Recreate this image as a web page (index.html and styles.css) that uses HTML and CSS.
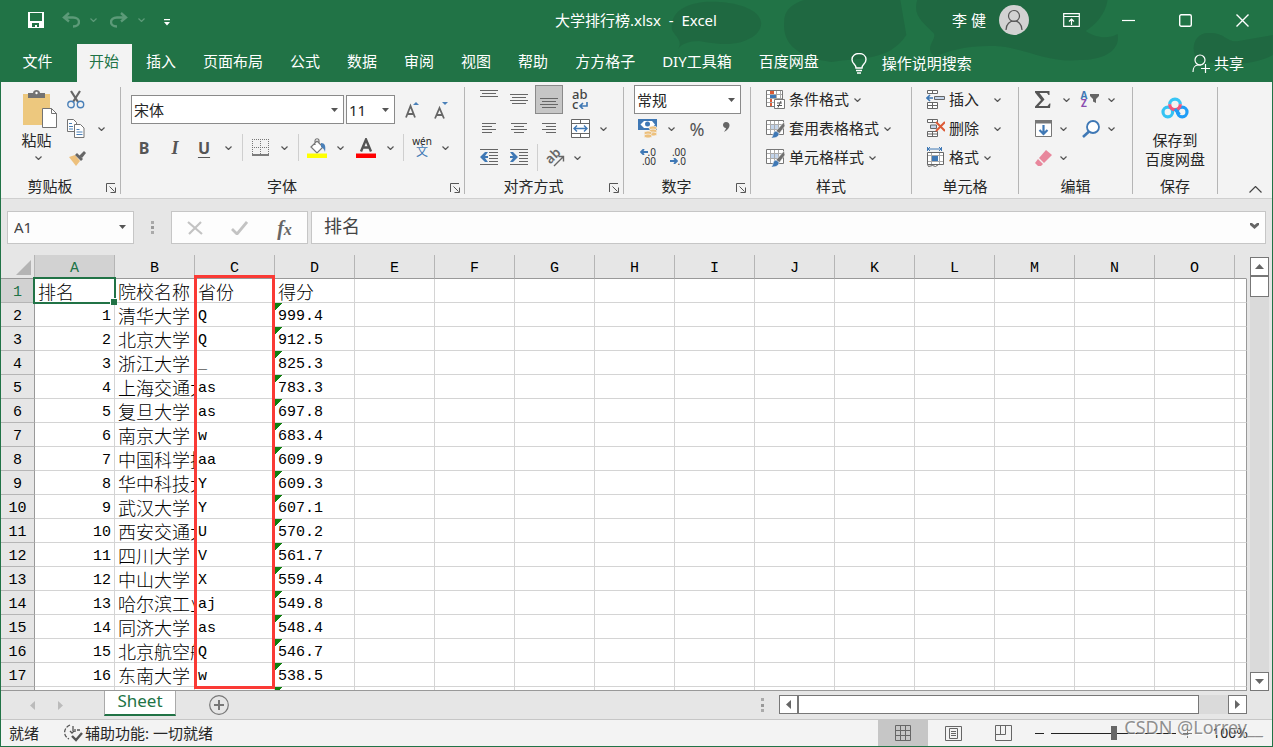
FILE: index.html
```html
<!DOCTYPE html>
<html lang="zh-CN">
<head>
<meta charset="utf-8">
<title>大学排行榜.xlsx - Excel</title>
<link rel="stylesheet" href="styles.css">
</head>
<body>
<svg class="defs" aria-hidden="true">
  <symbol id="chev" viewBox="0 0 7 4"><path d="M.5.5l3 3 3-3" fill="none" stroke="currentColor" stroke-width="1.2"/></symbol>
  <symbol id="tri" viewBox="0 0 7 4"><path d="M0 0h7L3.500 4z" fill="currentColor"/></symbol>
  <symbol id="launch" viewBox="0 0 10 10"><path d="M.5 9V.5H9M3.500 3.500l5 5M9.500 4.500v5h-5" fill="none" stroke="#555"/></symbol>
  <symbol id="table" viewBox="0 0 19 19"><path d="M.5 1.500h17v14H.5z" fill="#fff" stroke="#777"/><path d="M5 6h8v5H5z" fill="#c3d4ea"/><path d="M4.500 2v13M8.500 2v13M12.500 2v13M1 5.500h16M1 10.500h16" stroke="#aaa"/><path d="M18 3l1 4-6 8-3-3z" fill="#707070" stroke="#f3f3f3" stroke-width=".6"/><path d="M10 12l3 2c0 4-3 5-8 5 3-2 1-6 5-7z" fill="#3f78b5" stroke="#f3f3f3" stroke-width=".6"/></symbol>
</svg>
<div class="window">
  <header class="head">
    <svg class="art" viewBox="0 0 623 82" preserveAspectRatio="xMaxYMid slice" aria-hidden="true">
      <g fill="#1f6640" opacity=".8"><path d="M23 30C20 8 45 0 70 2c35 2 52 18 36 33-18 14-42 8-56 6-10 0-18 3-21 8 5-8-2-12-6-19z"/><path d="M135 22c0-12 8-18 20-22h96l6 35c-18 27-46 22-75 27-30-4-49-16-47-40z"/><path d="M268 0h190c-2 14-12 25-22 31 8 6 22 9 32 3 3 17-14 26-38 26-34 3-52-12-84-14-25-1-48 4-60 11-14-9 5-20-3-25C274 22 263 16 268 0z"/><path d="M548 60c-8-10-4-28 12-27 16 0 17 10 29 8l34-6v20c-18 10-51 12-75 5z"/></g>
    </svg>
    <div class="titlebar">
      <div class="qat">
        <button class="q-save" aria-label="保存"><svg width="16" height="16" viewBox="0 0 16 16"><path d="M0 0h16v16H0zM2 1v8h12V1zM4 11v4h3v-2h2v2h2v-4z" fill="#fff" fill-rule="evenodd"/></svg></button>
        <button class="q-btn dim" aria-label="撤消"><svg width="18" height="16" viewBox="0 0 18 16"><path d="M7 1L2 5.500l5 4M2 5.500h9c8 0 8 9 0 9" fill="none" stroke="currentColor" stroke-width="2.400"/></svg></button>
        <button class="q-chev dim" aria-label="撤消列表"><svg class="chev"><use href="#chev"/></svg></button>
        <button class="q-btn q-redo dim" aria-label="恢复"><svg width="18" height="16" viewBox="0 0 18 16"><path d="M11 1l5 4.500-5 4M16 5.500H7c-8 0-8 9 0 9" fill="none" stroke="currentColor" stroke-width="2.400"/></svg></button>
        <button class="q-chev dim" aria-label="恢复列表"><svg class="chev"><use href="#chev"/></svg></button>
        <button class="q-more" aria-label="自定义快速访问工具栏"><svg width="6" height="7" viewBox="0 0 6 7"><path d="M0 0h6v1.200H0zM0 3h6L3 6.500z" fill="#fff"/></svg></button>
      </div>
      <h1 class="title">大学排行榜.xlsx&nbsp; -&nbsp; Excel</h1>
      <div class="account">
        <span>李 健</span>
        <svg class="avatar" width="30" height="30" viewBox="0 0 30 30"><circle cx="15" cy="15" r="15" fill="#d2d2d2"/><g fill="none" stroke="#555" stroke-width="1.200"><circle cx="15" cy="11" r="5.500"/><path d="M7 25c0-12 16-12 16 0"/></g></svg>
        <button class="win" aria-label="功能区显示选项"><svg width="17" height="14" viewBox="0 0 17 14"><path d="M.7.7h15.600v12.600H.7zM1 3.500h15M8.500 12V6M6 8.500L8.500 6 11 8.500" fill="none" stroke="#fff" stroke-width="1.200"/></svg></button>
        <button class="win" aria-label="最小化"><svg width="13" height="13" viewBox="0 0 13 13"><path d="M0 6.500h13" stroke="#fff" stroke-width="1.200"/></svg></button>
        <button class="win" aria-label="最大化"><svg width="13" height="13" viewBox="0 0 13 13"><rect x=".7" y=".7" width="11.600" height="11.600" rx="1.500" fill="none" stroke="#fff" stroke-width="1.400"/></svg></button>
        <button class="win" aria-label="关闭"><svg width="13" height="13" viewBox="0 0 13 13"><path d="M.5.5l12 12M12.500.5l-12 12" stroke="#fff" stroke-width="1.400"/></svg></button>
      </div>
    </div>
    <nav class="tabs">
      <button class="tab file">文件</button>
      <button class="tab active">开始</button>
      <button class="tab">插入</button>
      <button class="tab">页面布局</button>
      <button class="tab">公式</button>
      <button class="tab">数据</button>
      <button class="tab">审阅</button>
      <button class="tab">视图</button>
      <button class="tab">帮助</button>
      <button class="tab">方方格子</button>
      <button class="tab">DIY工具箱</button>
      <button class="tab">百度网盘</button>
      <button class="tell"><svg width="16" height="21" viewBox="0 0 16 21"><path d="M5 15c0-4-4-4-4-8.500C1-1.500 15-1.500 15 6.500c0 4.500-4 4.500-4 8.500zM5 17.500h6M6 20h4" fill="none" stroke="#fff" stroke-width="1.400"/></svg>操作说明搜索</button>
      <button class="share"><svg width="18" height="19" viewBox="0 0 18 19"><g fill="none" stroke="#fff" stroke-width="1.200"><circle cx="8" cy="6" r="5"/><path d="M1 18c0-4 2-7 5-7h3M13.500 10v9M9 14.500h9"/></g></svg>共享</button>
    </nav>
  </header>

  <main class="main">
  <section class="ribbon" aria-label="开始">
    <div class="group g-clip">
      <div class="body clip">
        <button class="paste">
          <svg width="35" height="39" viewBox="0 0 35 39"><path d="M0 4h27v31H0z" fill="#edc87e"/><path d="M5 8V3h5c0-4 7-4 7 0h5v5z" fill="#737373"/><circle cx="13.500" cy="3" r="1.200" fill="#fff"/><path d="M19.500 18.500h9l5 5v14h-14z" fill="#fff" stroke="#737373"/><path d="M28.500 18.500v5h5" fill="none" stroke="#737373"/></svg>
          <span>粘贴</span><svg class="chev"><use href="#chev"/></svg>
        </button>
        <div class="rows">
          <div class="row"><button class="w32" aria-label="剪切"><svg width="18" height="19" viewBox="0 0 18 19"><path d="M4 1l7 11M13 1L6 12" stroke="#666" stroke-width="2.200"/><g fill="none" stroke="#4a80b8" stroke-width="1.400"><circle cx="4" cy="14.500" r="3.200"/><circle cx="13.500" cy="14.500" r="3.200"/></g></svg></button></div>
          <div class="row"><button class="w32" aria-label="复制"><svg width="18" height="19" viewBox="0 0 18 19"><g fill="#fff" stroke="#737373"><path d="M.5.5h6l3 3v9h-9z"/><path d="M7.500 5.500h6l3.500 3.500v9.500H7.500z"/></g><path d="M2 4.500h3M2 7.500h4M2 10h4M9.500 10.500h3M9.500 13h6M9.500 15.500h6" stroke="#4a80b8"/></svg></button><button class="w18" aria-label="复制选项"><svg class="chev"><use href="#chev"/></svg></button></div>
          <div class="row"><button class="w34" aria-label="格式刷"><svg width="18" height="16" viewBox="0 0 18 16"><path d="M1 7l6-2 5 6-4 5z" fill="#edc07c"/><path d="M7 5l2-2 6 6-2 2z" fill="#666"/><path d="M11 6l5-5 2 2-4 5z" fill="#666"/></svg></button></div>
        </div>
      </div>
      <div class="foot"><span>剪贴板</span><button class="launcher" aria-label="剪贴板设置"><svg width="10" height="10"><use href="#launch"/></svg></button></div>
    </div>

    <div class="group g-font">
      <div class="body fontbody">
        <div class="frow">
          <label class="combo c-name"><select aria-label="字体"><option>宋体</option></select><svg class="chev"><use href="#tri"/></svg></label>
          <label class="combo c-size"><select aria-label="字号"><option>11</option></select><svg class="chev"><use href="#tri"/></svg></label>
          <button class="w34" aria-label="增大字号"><svg width="14" height="18" viewBox="0 0 14 18"><path d="M1 16.500L5.500 5l4.500 11.500M2.500 13h6" fill="none" stroke="#666" stroke-width="1.800"/><path d="M8 4l3-3 3 3z" fill="#4a80b8"/></svg></button>
          <button class="w24" aria-label="减小字号"><svg width="14" height="18" viewBox="0 0 14 18"><path d="M1 17.500L5.500 7l4.500 10.500M2.500 14h6" fill="none" stroke="#666" stroke-width="1.800"/><path d="M8 1l3 3 3-3z" fill="#4a80b8"/></svg></button>
        </div>
        <div class="frow frow2">
          <button class="w30 letter">B</button><button class="w32 letter ital">I</button><button class="w26 letter und">U</button><button class="w22" aria-label="下划线选项"><svg class="chev"><use href="#chev"/></svg></button>
          <i class="sep s6"></i>
          <button class="w30" aria-label="边框"><svg width="17" height="17" viewBox="0 0 17 17"><path d="M.5 0v16M8.500 0v16M16.500 0v16M0 .5h17M0 8.500h17" stroke="#777" stroke-dasharray="1 1"/><path d="M0 16h17" stroke="#555" stroke-width="1.500"/></svg></button><button class="w18" aria-label="边框选项"><svg class="chev"><use href="#chev"/></svg></button>
          <i class="sep s10"></i>
          <button class="w28" aria-label="填充颜色"><svg width="20" height="20" viewBox="0 0 20 20"><path d="M4 9l6-6 6 6-6 6zM8 7V3c0-3 4-3 4 0v3" fill="#fff" stroke="#777" stroke-width="1.200"/><path d="M14 5c4 0 5 3 4 9-1-3-2-4-4-5z" fill="#4a80b8"/><path d="M0 15.500h20V20H0z" fill="#ff0"/></svg></button><button class="w18" aria-label="填充颜色选项"><svg class="chev"><use href="#chev"/></svg></button>
          <button class="w34" aria-label="字体颜色"><svg width="20" height="20" viewBox="0 0 20 20"><path d="M5 13.500L10 1.500l5 12M6.800 9.500h6.400" fill="none" stroke="#555" stroke-width="2.400"/><path d="M0 15.500h20V20H0z" fill="#f00"/></svg></button><button class="w14" aria-label="字体颜色选项"><svg class="chev"><use href="#chev"/></svg></button>
          <i class="sep s12"></i>
          <button class="w26 wen"><span>wén</span><b>文</b></button><button class="w20" aria-label="拼音选项"><svg class="chev"><use href="#chev"/></svg></button>
        </div>
      </div>
      <div class="foot"><span>字体</span><button class="launcher" aria-label="字体设置"><svg width="10" height="10"><use href="#launch"/></svg></button></div>
    </div>

    <div class="group g-align">
      <div class="body rows">
        <div class="row">
          <button class="w30" aria-label="顶端对齐"><svg class="up" width="18" height="7" viewBox="0 0 18 7"><path d="M0 .5h18M2 3.500h14M0 6.500h18" stroke="#666"/></svg></button>
          <button class="w30" aria-label="垂直居中"><svg width="18" height="11" viewBox="0 0 18 11"><path d="M0 .5h18M2 3.500h14M0 6.500h18M2 9.500h14" stroke="#666"/></svg></button>
          <button class="w30 on" aria-label="底端对齐"><svg class="down" width="18" height="11" viewBox="0 0 18 11"><path d="M0 .5h18M2 3.500h14M0 6.500h18M2 9.500h14" stroke="#666"/></svg></button>
          <button class="w32 wrap"><span>ab</span><span>c<svg width="9" height="7" viewBox="0 0 9 7"><path d="M8 0v4H1M4 1L1 4l3 3" fill="none" stroke="#3f78b5" stroke-width="1.600"/></svg></span></button>
        </div>
        <div class="row">
          <button class="w30" aria-label="左对齐"><svg width="15" height="11" viewBox="0 0 15 11"><path d="M0 .5h14M0 3.500h10M0 6.500h14M0 9.500h10" stroke="#666"/></svg></button>
          <button class="w30" aria-label="居中"><svg width="16" height="11" viewBox="0 0 16 11"><path d="M0 .5h16M3 3.500h10M0 6.500h16M3 9.500h10" stroke="#666"/></svg></button>
          <button class="w30" aria-label="右对齐"><svg width="14" height="11" viewBox="0 0 14 11"><path d="M0 .5h14M4 3.500h10M0 6.500h14M4 9.500h10" stroke="#666"/></svg></button>
          <button class="w32" aria-label="合并后居中"><svg width="19" height="19" viewBox="0 0 19 19"><path d="M.5.5h18v18H.5zM0 4.500h19M0 14.500h19M9.500 0v4M9.500 15v4" fill="#fff" stroke="#666"/><path d="M3 9.500h13M6 6.500l-3 3 3 3M13 6.500l3 3-3 3" fill="none" stroke="#3f78b5" stroke-width="1.400"/></svg></button>
          <button class="w14" aria-label="合并选项"><svg class="chev"><use href="#chev"/></svg></button>
        </div>
        <div class="row">
          <button class="w30" aria-label="减少缩进量"><svg width="18" height="17" viewBox="0 0 18 17"><path d="M0 .5h18M9 3.500h9M9 6.500h9M9 9.500h9M9 12.500h9M0 15.500h18" stroke="#666"/><path d="M0 8l5-5h3L5 7h3v2H5l3 4H5z" fill="#3f78b5"/></svg></button>
          <button class="w30" aria-label="增加缩进量"><svg width="18" height="17" viewBox="0 0 18 17"><path d="M0 .5h18M9 3.500h9M9 6.500h9M9 9.500h9M9 12.500h9M0 15.500h18" stroke="#666"/><path d="M8 8L3 3H0l3 4H0v2h3l-3 4h3z" fill="#3f78b5"/></svg></button>
          <i class="sep s6"></i>
          <button class="w30" aria-label="方向"><svg class="orient" width="19" height="18" viewBox="0 0 19 18"><text class="slant" x="7" y="11" transform="rotate(-45 7 7)">ab</text><path d="M8 17L17.500 7.500M12.500 7.500h5v5" fill="none" stroke="#666" stroke-width="1.400"/></svg></button>
          <button class="w14" aria-label="方向选项"><svg class="chev"><use href="#chev"/></svg></button>
        </div>
      </div>
      <div class="foot"><span>对齐方式</span><button class="launcher" aria-label="对齐设置"><svg width="10" height="10"><use href="#launch"/></svg></button></div>
    </div>

    <div class="group g-num">
      <div class="body rows">
        <div class="row"><label class="combo c-num"><select aria-label="数字格式"><option>常规</option></select><svg class="chev"><use href="#tri"/></svg></label></div>
        <div class="row">
          <button class="w28" aria-label="会计数字格式"><svg width="20" height="19" viewBox="0 0 20 19"><path d="M0 0h19v11H0z" fill="#3f78b5"/><path d="M2.500 5.500L6 2h8l3 3.500L14 9H6z" fill="#fff"/><circle cx="9.500" cy="5" r="2.500" fill="#3f78b5"/><g fill="#edc07c" stroke="#f3f3f3" stroke-width=".7"><ellipse cx="15" cy="9" rx="4" ry="2"/><ellipse cx="15" cy="12" rx="4" ry="2"/><ellipse cx="15" cy="15" rx="4" ry="2"/><ellipse cx="10" cy="14" rx="4" ry="2"/><ellipse cx="10" cy="17" rx="4" ry="2"/></g></svg></button>
          <button class="w18" aria-label="会计格式选项"><svg class="chev"><use href="#chev"/></svg></button>
          <button class="w34 pct">%</button>
          <button class="w24" aria-label="千位分隔样式"><svg class="comma" width="7" height="10" viewBox="0 0 7 10"><path d="M3 0c5 0 5 7-2 10 1-2 2-3 2-4-4 0-4-6 0-6z" fill="#666"/></svg></button>
        </div>
        <div class="row">
          <button class="w26 dec"><span><svg width="8" height="6" viewBox="0 0 8 6"><path d="M8 3H1M4 0L1 3l3 3" fill="none" stroke="#3f78b5" stroke-width="1.800"/></svg>.0</span><span>.00</span></button>
          <button class="w34 dec"><span>.00</span><span><svg width="8" height="6" viewBox="0 0 8 6"><path d="M0 3h7M4 0l3 3-3 3" fill="none" stroke="#3f78b5" stroke-width="1.800"/></svg>.0</span></button>
        </div>
      </div>
      <div class="foot"><span>数字</span><button class="launcher" aria-label="数字设置"><svg width="10" height="10"><use href="#launch"/></svg></button></div>
    </div>

    <div class="group g-style">
      <div class="body rows">
        <div class="row"><button class="cmd"><svg width="19" height="19" viewBox="0 0 19 19"><path d="M.5.5h16v16H.5z" fill="#fff" stroke="#777"/><path d="M4.500 1v15M10.500 1v8M14.500 1v8M1 4.500h15M1 8.500h15M1 12.500h8" stroke="#aaa"/><path d="M4 1h4v3H4zM4 9h2v3H4zM4 13h2v3H4z" fill="#dc5a36"/><path d="M4 5h6v3H4z" fill="#3f78b5"/><path d="M8.500 9.500h10v9h-10z" fill="#fff" stroke="#777"/><path d="M11 13h5M11 15.500h5M15 11l-3 6.500" stroke="#555"/></svg>条件格式<svg class="chev"><use href="#chev"/></svg></button></div>
        <div class="row"><button class="cmd"><svg width="19" height="19"><use href="#table"/></svg>套用表格格式<svg class="chev"><use href="#chev"/></svg></button></div>
        <div class="row"><button class="cmd"><svg width="19" height="19"><use href="#table"/></svg>单元格样式<svg class="chev"><use href="#chev"/></svg></button></div>
      </div>
      <div class="foot"><span>样式</span></div>
    </div>

    <div class="group g-cells">
      <div class="body rows">
        <div class="row"><button class="cmd far"><svg width="19" height="19" viewBox="0 0 19 19"><path d="M1.500.5h10v3h-10zM6.500.5v3M1.500 12.500h10v6h-10zM6.500 12.500v6M1.500 15.500h10" fill="#fff" stroke="#666"/><path d="M8.500 6.500h10v3h-10z" fill="#c3d4ea" stroke="#666"/><path d="M7 8H1M4 5L1 8l3 3" fill="none" stroke="#3f78b5" stroke-width="1.600"/></svg>插入<svg class="chev"><use href="#chev"/></svg></button></div>
        <div class="row"><button class="cmd far"><svg width="19" height="19" viewBox="0 0 19 19"><path d="M1.500.5h10v3h-10zM6.500.5v3M1.500 12.500h10v5h-10zM6.500 12.500v5M1.500 15h10" fill="#fff" stroke="#666"/><path d="M4.500 6h6v3.500h-6z" fill="#c3d4ea" stroke="#666"/><path d="M10 3l9 9M19 3l-9 9" stroke="#dc5a36" stroke-width="2"/></svg>删除<svg class="chev"><use href="#chev"/></svg></button></div>
        <div class="row"><button class="cmd"><svg width="19" height="20" viewBox="0 0 19 20"><path d="M1 2h15M1.500 0v4M15.500 0v4M4 0L2 2l2 2M13 0l2 2-2 2" fill="none" stroke="#3f78b5"/><path d="M1.500 5.500h16v12h-16z" fill="#fff" stroke="#666"/><path d="M5.500 6v11M13.500 6v11M2 8.500h15M2 14.500h15" fill="none" stroke="#aaa"/><path d="M1.500 17.500l1 2 4-1 3 1 3-2" fill="none" stroke="#666"/><path d="M6 9h6v5H6z" fill="#3f78b5"/></svg>格式<svg class="chev"><use href="#chev"/></svg></button></div>
      </div>
      <div class="foot"><span>单元格</span></div>
    </div>

    <div class="group g-edit">
      <div class="body rows">
        <div class="row">
          <button class="w28" aria-label="自动求和"><svg width="16" height="17" viewBox="0 0 16 17"><path d="M0 0h14.500v4h-1L12 2H4.500l5 6.500-6 6.500h9l2-2.500h1L15 17H0v-1.500l6-6.500L0 1.500z" fill="#555"/></svg></button><button class="w18" aria-label="求和选项"><svg class="chev"><use href="#chev"/></svg></button>
          <button class="w30 az"><span><b>A</b><em>Z</em></span><svg width="9" height="9" viewBox="0 0 9 9"><path d="M0 0h9v2L6 5v4L3 7.500V5L0 2z" fill="#666"/></svg></button><button class="w12" aria-label="排序选项"><svg class="chev"><use href="#chev"/></svg></button>
        </div>
        <div class="row">
          <button class="w28" aria-label="填充"><svg width="17" height="17" viewBox="0 0 17 17"><path d="M.5.5h16v16H.5z" fill="#fff" stroke="#777"/><path d="M0 0h17v3.500H0z" fill="#777"/><path d="M8.500 5v9M4.500 10l4 4 4-4" fill="none" stroke="#3f78b5" stroke-width="2.200"/></svg></button><button class="w12" aria-label="填充选项"><svg class="chev"><use href="#chev"/></svg></button>
          <button class="w28 find" aria-label="查找和选择"><svg width="18" height="18" viewBox="0 0 18 18"><circle cx="11" cy="7" r="6" fill="#fff" stroke="#3f78b5" stroke-width="1.800"/><path d="M7 11.500L1 17" stroke="#3f78b5" stroke-width="2.600"/></svg></button><button class="w12" aria-label="查找选项"><svg class="chev"><use href="#chev"/></svg></button>
        </div>
        <div class="row">
          <button class="w28" aria-label="清除"><svg width="17" height="16" viewBox="0 0 17 16"><path d="M11 0l6 5-8 8-5-5z" fill="#e8879c"/><path d="M3 9l5 5-2 2H3l-3-3z" fill="#e8879c"/></svg></button><button class="w12" aria-label="清除选项"><svg class="chev"><use href="#chev"/></svg></button>
        </div>
      </div>
      <div class="foot"><span>编辑</span></div>
    </div>

    <div class="group g-save">
      <div class="body">
        <button class="baidu"><svg width="28" height="22" viewBox="0 0 28 22"><g fill="none" stroke-width="3.200"><circle cx="6.800" cy="15" r="4.800" stroke="#35c3f3"/><circle cx="21.200" cy="15" r="4.800" stroke="#1e9df7"/><path d="M8.700 7.500a5.300 5.300 0 0 1 10.600 0" stroke="#38c5f5"/><path d="M8.700 7.300a5.300 5.300 0 0 0 10.600 0" stroke="#f2557c"/><path d="M14 12l4.500 5.500" stroke="#1e9df7"/></g></svg><span>保存到</span><span>百度网盘</span></button>
      </div>
      <div class="foot"><span>保存</span></div>
    </div>
    <button class="collapse" aria-label="折叠功能区"><svg width="13" height="7" viewBox="0 0 13 7"><path d="M.5 6.500l6-6 6 6" fill="none" stroke="#444" stroke-width="1.200"/></svg></button>
  </section>

  <section class="fbar">
    <label class="namebox"><input value="A1" aria-label="名称框"><svg class="chev"><use href="#tri"/></svg></label>
    <i class="dots"></i>
    <div class="fbtns">
      <button aria-label="取消"><svg width="16" height="14" viewBox="0 0 16 14"><path d="M1 1l14 12M14 1L2 13" stroke="#c3c3c3" stroke-width="2.200"/></svg></button>
      <button aria-label="输入"><svg width="17" height="14" viewBox="0 0 17 14"><path d="M1 8l5 5L16 1" fill="none" stroke="#c3c3c3" stroke-width="2.800"/></svg></button>
      <button class="fx" aria-label="插入函数"><i>f</i><i class="x">x</i></button>
    </div>
    <label class="formula"><input value="排名" aria-label="编辑栏"><svg width="9" height="6" viewBox="0 0 9 6"><path d="M0 0h2l2.500 2L7 0h2v2L4.500 6 0 2z" fill="#666"/></svg></label>
  </section>

  <section class="work">
    <div class="sheet">
      <table>
        <colgroup><col class="c-head"><col span="15" class="c-col"><col></colgroup>
        <thead><tr><th class="corner"><svg width="15" height="15" viewBox="0 0 15 15"><path d="M15 0v15H0z" fill="#b4b4b4"/></svg></th><th class="sel">A</th><th>B</th><th>C</th><th>D</th><th>E</th><th>F</th><th>G</th><th>H</th><th>I</th><th>J</th><th>K</th><th>L</th><th>M</th><th>N</th><th>O</th><th class="last"></th></tr></thead>
        <tbody>
          <tr><th class="sel">1</th><td class="zh">排名</td><td class="zh">院校名称</td><td class="zh">省份</td><td class="zh">得分</td><td class="rest" colspan="12"></td></tr>
          <tr><th>2</th><td class="n">1</td><td class="zh">清华大学</td><td>Q</td><td class="t">999.4</td><td class="rest" colspan="12"></td></tr>
          <tr><th>3</th><td class="n">2</td><td class="zh">北京大学</td><td>Q</td><td class="t">912.5</td><td class="rest" colspan="12"></td></tr>
          <tr><th>4</th><td class="n">3</td><td class="zh">浙江大学</td><td>_</td><td class="t">825.3</td><td class="rest" colspan="12"></td></tr>
          <tr><th>5</th><td class="n">4</td><td class="zh">上海交通大学</td><td>as</td><td class="t">783.3</td><td class="rest" colspan="12"></td></tr>
          <tr><th>6</th><td class="n">5</td><td class="zh">复旦大学</td><td>as</td><td class="t">697.8</td><td class="rest" colspan="12"></td></tr>
          <tr><th>7</th><td class="n">6</td><td class="zh">南京大学</td><td>w</td><td class="t">683.4</td><td class="rest" colspan="12"></td></tr>
          <tr><th>8</th><td class="n">7</td><td class="zh">中国科学技术大学</td><td>aa</td><td class="t">609.9</td><td class="rest" colspan="12"></td></tr>
          <tr><th>9</th><td class="n">8</td><td class="zh">华中科技大学</td><td>Y</td><td class="t">609.3</td><td class="rest" colspan="12"></td></tr>
          <tr><th>10</th><td class="n">9</td><td class="zh">武汉大学</td><td>Y</td><td class="t">607.1</td><td class="rest" colspan="12"></td></tr>
          <tr><th>11</th><td class="n">10</td><td class="zh">西安交通大学</td><td>U</td><td class="t">570.2</td><td class="rest" colspan="12"></td></tr>
          <tr><th>12</th><td class="n">11</td><td class="zh">四川大学</td><td>V</td><td class="t">561.7</td><td class="rest" colspan="12"></td></tr>
          <tr><th>13</th><td class="n">12</td><td class="zh">中山大学</td><td>X</td><td class="t">559.4</td><td class="rest" colspan="12"></td></tr>
          <tr><th>14</th><td class="n">13</td><td class="zh">哈尔滨工业大学</td><td>aj</td><td class="t">549.8</td><td class="rest" colspan="12"></td></tr>
          <tr><th>15</th><td class="n">14</td><td class="zh">同济大学</td><td>as</td><td class="t">548.4</td><td class="rest" colspan="12"></td></tr>
          <tr><th>16</th><td class="n">15</td><td class="zh">北京航空航天大学</td><td>Q</td><td class="t">546.7</td><td class="rest" colspan="12"></td></tr>
          <tr><th>17</th><td class="n">16</td><td class="zh">东南大学</td><td>w</td><td class="t">538.5</td><td class="rest" colspan="12"></td></tr>
          <tr><th></th><td></td><td></td><td></td><td class="t"></td><td class="rest" colspan="12"></td></tr>
        </tbody>
      </table>
      <div class="cursor"></div>
      <div class="mark"></div>
    </div>
    <div class="vscroll"><button aria-label="向上滚动"><svg width="9" height="5" viewBox="0 0 9 5"><path d="M0 5h9L4.500 0z" fill="#666"/></svg></button><div class="vthumb"></div><button class="end" aria-label="向下滚动"><svg width="9" height="5" viewBox="0 0 9 5"><path d="M0 0h9L4.500 5z" fill="#666"/></svg></button></div>
  </section>

  <section class="sheetbar">
    <button class="nav" aria-label="上一个工作表"><svg width="5" height="9" viewBox="0 0 5 9"><path d="M5 0v9L0 4.500z" fill="#bbb"/></svg></button>
    <button class="nav" aria-label="下一个工作表"><svg width="5" height="9" viewBox="0 0 5 9"><path d="M0 0v9l5-4.500z" fill="#bbb"/></svg></button>
    <button class="sheettab">Sheet</button>
    <button class="add" aria-label="新工作表"><svg width="20" height="20" viewBox="0 0 20 20"><circle cx="10" cy="10" r="9.300" fill="none" stroke="#777" stroke-width="1.200"/><path d="M10 5v10M5 10h10" stroke="#777" stroke-width="2"/></svg></button>
    <i class="dots small"></i>
    <div class="hscroll"><button aria-label="向左滚动"><svg width="5" height="9" viewBox="0 0 5 9"><path d="M5 0v9L0 4.500z" fill="#666"/></svg></button><div class="hthumb"></div><button class="end" aria-label="向右滚动"><svg width="5" height="9" viewBox="0 0 5 9"><path d="M0 0v9l5-4.500z" fill="#666"/></svg></button></div>
  </section>

  <footer class="status">
    <span class="ready">就绪</span>
    <button class="access"><svg width="19" height="18" viewBox="0 0 19 18"><path d="M6 1C-1 4-1 12 5 15" fill="none" stroke="#555" stroke-width="1.300" stroke-dasharray="4 1.500"/><path d="M9 2v5M6 7l2 2 2-2M13 6h3M11 5v3" fill="none" stroke="#555" stroke-width="1.300"/><path d="M8 12l4 4 6-7" fill="none" stroke="#555" stroke-width="2.400"/></svg>辅助功能: 一切就绪</button>
    <button class="view on" aria-label="普通"><svg width="16" height="16" viewBox="0 0 16 16"><path d="M.5.5h15v15H.5zM5.500 0v16M10.500 0v16M0 5.500h16M0 10.500h16" fill="none" stroke="#666"/></svg></button>
    <button class="view" aria-label="页面布局视图"><svg width="17" height="15" viewBox="0 0 17 15"><path d="M.5.5h16v14H.5zM4.500 2.500h8v10h-8zM6 5.500h5M6 7.500h5M6 9.500h5" fill="none" stroke="#666"/></svg></button>
    <button class="view" aria-label="分页预览"><svg width="17" height="16" viewBox="0 0 17 16"><path d="M.5.5h16v15H.5zM.5 9.500h10V.5M5.500.5v9" fill="none" stroke="#666"/></svg></button>
    <button class="zoom" aria-label="缩小"><svg width="9" height="9" viewBox="0 0 9 9"><path d="M0 4.500h9" stroke="#222"/></svg></button>
    <input class="slider" type="range" min="0" max="100" value="50" aria-label="缩放">
    <button class="zoom" aria-label="放大"><svg width="9" height="9" viewBox="0 0 9 9"><path d="M0 4.500h9M4.500 0v9" stroke="#777"/></svg></button>
    <button class="level">100%</button>
    <span class="watermark">CSDN @Lorrey__</span>
  </footer>
  </main>
</div>
</body>
</html>
```
FILE: styles.css
```css
* { box-sizing: border-box; }
body { margin: 0; font: 15px/20px "Noto Sans", "Noto Sans CJK SC", sans-serif; color: #262626; }
button, input, select { font: inherit; color: inherit; border: 0; padding: 0; margin: 0; background: none; outline: 0; }
button { display: flex; align-items: center; justify-content: center; white-space: nowrap; flex: none; }
svg { display: block; flex: none; }
.defs { position: absolute; width: 0; height: 0; }
.chev { width: 7px; height: 4px; color: #555; }

.window { height: 100vh; display: flex; flex-direction: column; overflow: hidden; background: #e6e6e6; }
.main { flex: 1; min-height: 0; display: flex; flex-direction: column; border: solid #217346; border-width: 0 1px 1px; }

/* title and tabs */
.head { position: relative; background: #217346; color: #fff; padding: 0 1px; }
.art { position: absolute; right: 0; top: 0; width: 49%; height: 100%; }
.titlebar { position: relative; display: grid; grid-template-columns: 1fr auto 1fr; height: 44px; align-items: center; padding: 0 1px 4px 0; }
.title { margin: 0; font-size: 15px; font-weight: 400; }
.qat { display: flex; align-items: center; padding-left: 19px; }
.qat .chev { color: inherit; }
.dim { color: #5c9a78; }
.q-save { width: 32px; margin-right: 4px; }
.q-btn { width: 30px; }
.q-chev { width: 14px; }
.q-redo { margin-left: 4px; }
.q-more { width: 18px; margin-left: 10px; padding-top: 4px; }
.account { display: flex; align-items: center; justify-content: flex-end; }
.avatar { margin: 0 14px 0 13px; }
.win { width: 57px; height: 30px; }
.tabs { position: relative; display: flex; height: 38px; gap: 1px; }
.tab { padding: 0 13px 4px; }
.tab.file { width: 75px; padding: 0 2px 4px 0; }
.tab.active { background: #f3f3f3; color: #217346; padding: 0 13px 4px 12px; }
.tell { gap: 15px; padding-left: 18px; }
.share { gap: 4px; margin-left: auto; padding-right: 28px; }

/* ribbon */
.ribbon { display: flex; background: #f3f3f3; border-bottom: 1px solid #cfcfcf; padding: 5px 0 4px; height: 117px; flex: none; }
.group { display: flex; flex-direction: column; border-right: 1px solid #b5b5b5; height: 107px; flex: none; }
.body { height: 87px; margin-top: -2px; }
.foot { display: flex; height: 22px; padding-top: 4px; }
.foot span { flex: 1; text-align: center; }
.launcher { width: 21px; height: 20px; padding: 3px 0 0 3px; }
.row { display: flex; height: 29px; align-items: center; }
.row button { height: 29px; }
.g-clip { width: 120px; }
.g-font { width: 344px; }
.g-align { width: 159px; }
.g-num { width: 127px; }
.g-style { width: 161px; }
.g-cells { width: 107px; }
.g-edit { width: 114px; }
.g-save { width: 85px; }
.g-align .body { padding-left: 9px; }
.g-num .body, .g-edit .body { padding-left: 10px; }
.g-style .body { padding-left: 15px; }
.g-cells .body { padding-left: 14px; }
.w12 { width: 12px; } .w14 { width: 14px; } .w18 { width: 18px; } .w20 { width: 20px; } .w22 { width: 22px; }
.w24 { width: 24px; } .w26 { width: 26px; } .w28 { width: 28px; } .w30 { width: 30px; } .w32 { width: 32px; } .w34 { width: 34px; }
.clip { display: flex; }
.paste { flex-direction: column; justify-content: flex-start; width: 59px; padding: 5px 0 0 16px; }
.paste span { margin: 1px 4px 6px 0; }
.paste svg:first-child { margin-left: 3px; }
.fontbody { padding: 10px 0 0 8px; }
.frow { display: flex; align-items: center; height: 29px; }
.frow2 { margin-top: 9px; }
.combo { display: flex; align-items: center; height: 29px; border: 1px solid #8a8a8a; background: #fff; padding-right: 5px; }
.combo select { flex: 1; min-width: 0; height: 27px; padding-left: 2px; appearance: none; }
.c-name { width: 213px; margin: 0 2px; }
.c-size { width: 49px; }
.c-num { width: 107px; }
.letter { font-weight: 700; font-size: 16px; color: #555; }
.ital { font-family: "Liberation Serif", serif; font-style: italic; font-size: 18px; }
.und { text-decoration: underline; text-underline-offset: 3px; }
.sep { height: 27px; background: linear-gradient(#cfcfcf, #cfcfcf) center / 1px 100% no-repeat; flex: none; }
.s6 { width: 6px; } .s10 { width: 10px; } .s12 { width: 12px; }
.wen { flex-direction: column; font-size: 10px; line-height: 8px; }
.wen b { font-size: 12px; line-height: 13px; color: #3f78b5; font-weight: 400; }
.row .on { background: #c6c6c6; border: 1px solid #8a8a8a; width: 28px; margin: 0 1px; }
.up { margin-bottom: 12px; }
.down { margin-top: 8px; }
.wrap { flex-direction: column; align-items: flex-start; padding: 0 0 2px 8px; font-size: 13px; line-height: 10px; font-weight: 500; color: #444; }
.wrap span { display: flex; align-items: center; }
.wrap svg { margin: 3px 0 0 1px; }
.orient { overflow: visible; }
.slant { font-size: 13px; font-weight: 600; fill: #666; text-anchor: middle; }
.pct { font-size: 18px; color: #555; }
.comma { margin-bottom: 3px; }
.dec { flex-direction: column; align-items: flex-end; padding: 0 4px 2px 0; font-size: 10px; line-height: 9px; color: #333; }
.g-num .w34.dec { padding-right: 8px; }
.dec span { display: flex; align-items: center; }
.row .cmd { gap: 4px; padding-bottom: 1px; }
.cmd .chev { margin: 1px 0 0 1px; }
.far .chev { margin-left: 11px; }
.az { gap: 3px; padding-bottom: 2px; }
.az span { display: flex; flex-direction: column; font-size: 10px; line-height: 8px; }
.az b { color: #3f78b5; }
.az em { color: #8a4baf; font-style: normal; font-weight: 700; }
.find { margin-left: 8px; }
.baidu { flex-direction: column; width: 84px; padding-top: 12px; line-height: 19px; }
.baidu svg { margin-bottom: 12px; }
.collapse { margin-left: auto; width: 34px; align-items: flex-end; padding-bottom: 1px; }

/* formula bar */
.fbar { display: flex; height: 56px; padding: 12px 6px; flex: none; }
.namebox, .fbtns, .formula { display: flex; align-items: center; background: #fdfdfd; border: 1px solid #c6c6c6; height: 33px; }
.namebox { width: 127px; padding: 0 7px 2px 6px; color: #444; }
.namebox input { flex: 1; min-width: 0; }
.dots { width: 37px; background: radial-gradient(#999, #999) center / 3px 3px no-repeat, linear-gradient(#aaa, #aaa) center 10px / 3px 3px no-repeat, linear-gradient(#aaa, #aaa) center 20px / 3px 3px no-repeat; height: 33px; }
.fbtns { width: 137px; }
.fbtns button { flex: 1; }
.fx { font: italic 700 20px/24px "Liberation Serif", serif; color: #666; }
.fx .x { font-size: 16px; padding-top: 4px; }
.formula { flex: 1; margin-left: 3px; padding: 0 6px 3px 12px; }
.formula input { flex: 1; font-size: 18px; color: #444; }

/* worksheet */
.work { flex: 1; min-height: 0; display: flex; }
.sheet { position: relative; flex: 1; min-width: 0; overflow: hidden; border-bottom: 1px solid #999; }
table { width: 100%; table-layout: fixed; border-spacing: 0; border-collapse: separate; font: 15px/19px "Liberation Mono", monospace; color: #000; }
.c-head { width: 34px; }
.c-col { width: 80px; }
th, td { height: 24px; padding: 4px 3px 0; border: solid #d4d4d4; border-width: 0 1px 1px 0; overflow: hidden; white-space: nowrap; text-align: left; vertical-align: top; }
td { background: #fff; }
th { background: #e6e6e6; font-weight: 400; text-align: center; padding: 4px 0 0; border-color: #b5b5b5; }
tbody th { border-right-color: #999; }
thead th { border-bottom-color: #999; border-right-color: #b5b5b5; }
th.sel { background: #d2d2d2; color: #217346; }
th.last { border-right-color: #e6e6e6; }
.corner svg { margin: 1px 0 0 15px; }
.zh { font: 18px/22px "Noto Sans CJK SC", sans-serif; font-weight: 300; padding-top: 1px; }
.n { text-align: right; }
.t { background: linear-gradient(135deg, #108010 5px, #fff 5px); }
.rest { border-right-color: #999; background: repeating-linear-gradient(90deg, #fff 0 79px, #d4d4d4 79px 80px); }
.cursor { position: absolute; left: 32px; top: 22px; width: 83px; height: 27px; border: 2px solid #217346; }
.cursor::after { content: ""; position: absolute; right: -3px; bottom: -3px; width: 6px; height: 6px; background: #217346; border: solid #fff; border-width: 1px 0 0 1px; }
.mark { position: absolute; left: 193px; top: 20px; bottom: 1px; width: 81px; border: 3px solid #fa3a35; }
.vscroll { width: 19px; margin: 2px 3px 0; display: flex; flex-direction: column; background: #dadada; }
.vscroll button, .hscroll button { width: 19px; height: 19px; background: #fff; border: 1px solid #777; }
.vthumb { height: 21px; background: #fff; border: 1px solid #777; }
.vscroll .end { margin-top: auto; }
.sheetbar { display: flex; height: 29px; border-bottom: 1px solid #c6c6c6; padding-right: 25px; flex: none; }
.nav { width: 28px; }
.nav:first-child { margin-left: 17px; }
.sheettab { width: 72px; height: 25px; margin: 0 33px 0 30px; background: #fff; border-bottom: 2px solid #217346; border-left: 1px solid #aaa; border-right: 1px solid #aaa; color: #217346; font-size: 17px; padding-bottom: 3px; }
.small { margin-left: auto; width: 33px; height: 28px; background-position: center, center 7px, center 18px; }
.hscroll { display: flex; width: 468px; height: 19px; margin-top: 4px; background: #dadada; }
.hthumb { width: 401px; background: #fff; border: 1px solid #777; }
.hscroll .end { margin-left: auto; }

/* status bar */
.status { position: relative; display: flex; align-items: center; height: 26px; background: #f3f3f3; flex: none; padding-right: 24px; }
.ready { margin: 0 25px 0 8px; }
.access { gap: 2px; margin-right: auto; }
.view { width: 50px; height: 26px; }
.view.on { background: #c6c6c6; }
.zoom { width: 23px; height: 26px; }
.slider { appearance: none; width: 125px; height: 26px; background: linear-gradient(#222, #222) center / 100% 1px no-repeat; }
.slider::-webkit-slider-thumb { appearance: none; width: 6px; height: 14px; background: #666; }
.level { width: 49px; font-size: 14px; justify-content: flex-end; }
.watermark { position: absolute; right: 9px; top: -5px; font-size: 18px; line-height: 24px; color: #777; opacity: .8; text-shadow: 1px 1px #fff; }
```
